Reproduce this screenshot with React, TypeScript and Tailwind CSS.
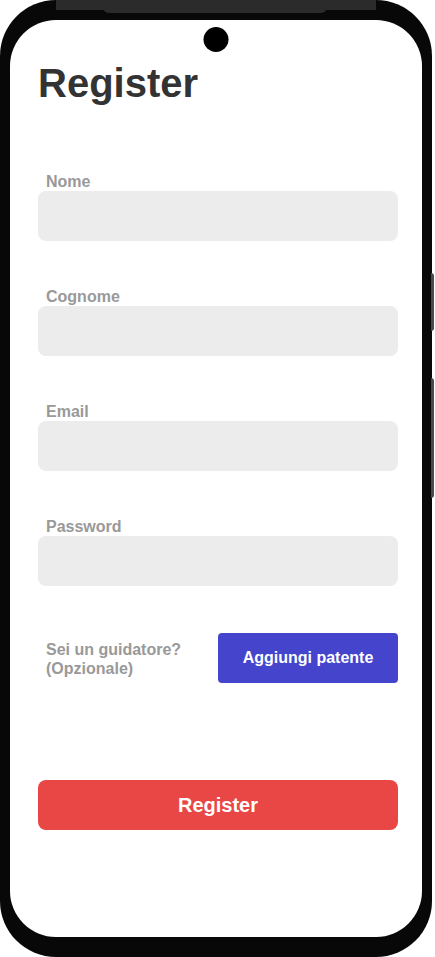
export default function App() {
  const fields = ['Nome', 'Cognome', 'Email', 'Password'];

  return (
    <div className="w-[435px] h-[957px] bg-white" style={{ fontFamily: '"Liberation Sans", Arial, sans-serif' }}>
      <div className="relative w-[432px] h-[957px] rounded-[56px] bg-[#080808] px-[10px] py-[20px]">
        {/* top speaker bar */}
        <div className="absolute top-0 left-[56px] w-[320px] h-[10px] bg-[#2b2b2b]" />
        <div className="absolute top-0 left-[103px] w-[224px] h-[13px] rounded-b-[6px] bg-[#2b2b2b]" />
        {/* side buttons */}
        <div className="absolute left-[431px] top-[273px] w-[3px] h-[58px] rounded-r-sm bg-[#4a4a4a]" />
        <div className="absolute left-[431px] top-[378px] w-[3px] h-[120px] rounded-r-sm bg-[#4a4a4a]" />

        <div className="relative h-full rounded-[46px] bg-white pl-[28px] pr-[24px] pt-[40px]">
          {/* camera */}
          <div className="absolute left-1/2 top-[7px] w-[25px] h-[25px] -translate-x-1/2 rounded-full bg-black" />

          <h1 className="text-[40px] font-bold leading-[1.15] text-[#333333]">Register</h1>

          <div className="mt-[67px] flex flex-col gap-[47px]">
            {fields.map((f) => (
              <div key={f} className="flex flex-col">
                <label className="pl-2 text-[16px] font-bold leading-[18px] text-[#999999]">{f}</label>
                <div className="h-[50px] rounded-lg bg-[#ececec]" />
              </div>
            ))}
          </div>

          <div className="mt-[47px] flex items-center justify-between">
            <p className="pl-2 pt-[3px] text-[16px] font-bold leading-[1.15] text-[#999999]">
              Sei un guidatore?
              <br />
              (Opzionale)
            </p>
            <button className="w-[180px] h-[50px] rounded-[4px] bg-[#4444cc] text-[16px] font-bold text-white">
              Aggiungi patente
            </button>
          </div>

          <button className="mt-[97px] w-full h-[50px] rounded-lg bg-[#e94646] text-[20px] font-bold text-white">
            Register
          </button>
        </div>
      </div>
    </div>
  );
}
